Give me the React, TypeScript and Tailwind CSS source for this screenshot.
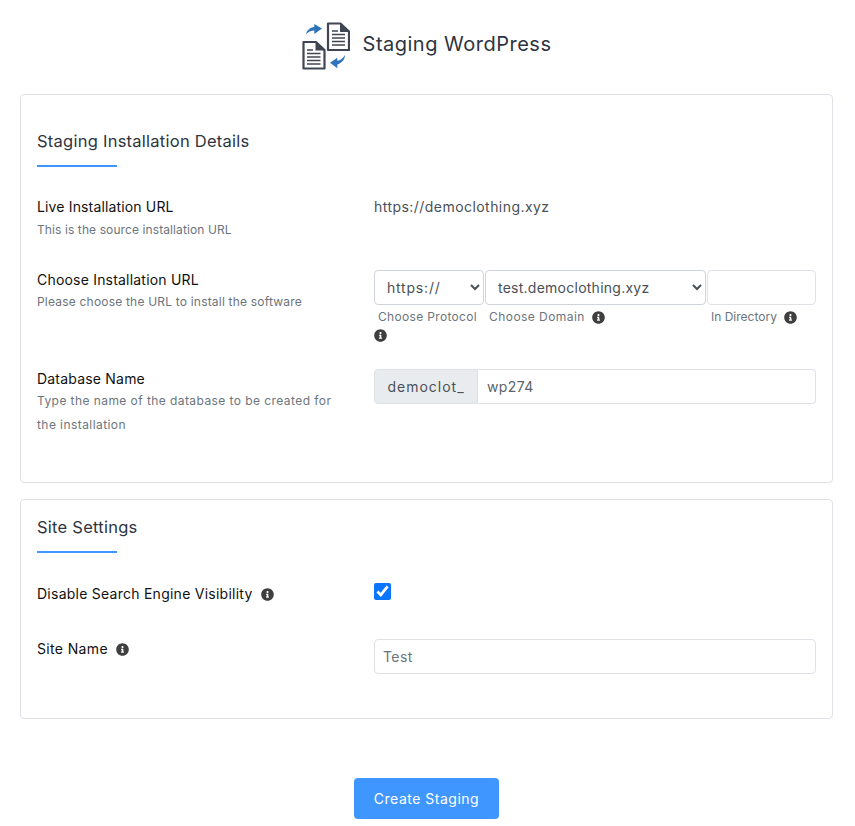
import { FaInfoCircle } from "react-icons/fa";

function Info({ className = "" }: { className?: string }) {
  return <FaInfoCircle className={`w-[13px] h-[13px] text-[#3f3f3f] ${className}`} />;
}

function StagingIcon() {
  return (
    <svg width="48" height="48" viewBox="0 0 48 48" className="shrink-0">
      {/* back document */}
      <path d="M26 1.500h12.500l8.500 8v18.500h-21z" fill="#fff" stroke="#3f4553" strokeWidth="2.200" strokeLinejoin="round" />
      <path d="M38 1v9h9.500z" fill="#3f4553" />
      <path d="M30 9h6M30 12.500h13M30 16h13M30 19.500h13M30 23h13" stroke="#3f4553" strokeWidth="1.600" />
      {/* front document */}
      <path d="M1.500 20h12.500l8.500 8v18.500h-21z" fill="#fff" stroke="#3f4553" strokeWidth="2.200" strokeLinejoin="round" />
      <path d="M13.500 19.500v9h9.500z" fill="#3f4553" />
      <path d="M5 28h6M5 31.500h13.500M5 35h13.500M5 38.500h13.500M5 42h13.500" stroke="#3f4553" strokeWidth="1.600" />
      {/* arrows */}
      <path d="M4 12.500C4.500 8.500 8 5.500 12.300 5V2L20 6.500 12.300 12V8.500C9 8.500 6 10 4 12.500z" fill="#2f74ba" />
      <path d="M43 33C43 38 39 41.500 35.300 42.500V46.300L28 40.700 35.300 35.800V38.800C38.500 38.500 41 36 43 33z" fill="#2f74ba" />
    </svg>
  );
}

function Card({ title, className, children }: { title: string; className: string; children: React.ReactNode }) {
  return (
    <section className={`border border-[#dee2e6] rounded-[4px] bg-white px-4 ${className}`}>
      <h2 className="text-[16.500px] leading-6 text-[#2e3440] tracking-[0.25px]">{title}</h2>
      <div className="w-20 h-[2px] bg-[#4096ff] mt-3" />
      {children}
    </section>
  );
}

export default function App() {
  return (
    <div className="font-['Inter',sans-serif] bg-white w-[855px] h-[826px] overflow-hidden px-5 pt-[22px] text-[#212529]">
      <header className="flex items-center justify-center gap-[13px] h-12 pr-[2px]">
        <StagingIcon />
        <h1 className="text-[20px] leading-7 mb-1 text-[#2e3440] tracking-[0.5px]">Staging WordPress</h1>
      </header>

      <div className="w-[813px] mt-6">
        <Card title="Staging Installation Details" className="pt-[34px] h-[389px]">
          <div className="grid grid-cols-[337px_442px] mt-[28px]">
            <div>
              <div className="text-[14px] leading-6 text-[#111] tracking-[0.15px]">Live Installation URL</div>
              <p className="text-[12px] leading-5 mt-[1px] text-[#6c757d] tracking-[0.1px]">This is the source installation URL</p>
            </div>
            <div className="text-[14px] leading-6 text-[#495057] tracking-[0.45px]">https://democlothing.xyz</div>
          </div>

          <div className="grid grid-cols-[337px_442px] mt-[30px]">
            <div>
              <div className="text-[14px] leading-5 text-[#111] tracking-[0.2px]">Choose Installation URL</div>
              <p className="text-[12px] leading-5 mt-[2px] text-[#6c757d] tracking-[0.2px]">Please choose the URL to install the software</p>
            </div>
            <div className="flex gap-[1px]">
              <div className="w-[110px]">
                <select className="w-full h-[35px] border border-[#ced4da] rounded-[4px] bg-white pl-2 text-[14px] text-[#495057] tracking-[0.8px]">
                  <option>https://</option>
                </select>
                <div className="text-[12px] leading-[14px] mt-[5px] pl-1 text-[#6c757d] tracking-[0.33px] whitespace-nowrap">Choose Protocol</div>
                <Info className="mt-[5px]" />
              </div>
              <div className="w-[221px]">
                <select className="w-full h-[35px] border border-[#ced4da] rounded-[4px] bg-white pl-2 text-[14px] text-[#495057] tracking-[0.25px]">
                  <option>test.democlothing.xyz</option>
                </select>
                <div className="flex items-center gap-[7px] text-[12px] leading-[14px] mt-[5px] pl-1 text-[#6c757d] tracking-[0.45px]">
                  Choose Domain <Info />
                </div>
              </div>
              <div className="w-[109px]">
                <input className="w-full h-[35px] border border-[#dee2e6] rounded-[4px] bg-white" />
                <div className="flex items-center gap-[7px] text-[12px] leading-[14px] mt-[5px] pl-1 text-[#6c757d]">
                  In Directory <Info />
                </div>
              </div>
            </div>
          </div>

          <div className="grid grid-cols-[337px_442px] mt-[27px]">
            <div>
              <div className="text-[14px] leading-5 text-[#111] tracking-[0.2px]">Database Name</div>
              <p className="text-[12px] leading-6 w-[300px] text-[#6c757d] tracking-[0.43px]">
                Type the name of the database to be created for the installation
              </p>
            </div>
            <div className="flex h-[35px]">
              <span className="flex items-center justify-center w-[104px] bg-[#e9ecef] border border-[#dee2e6] rounded-l-[4px] text-[14px] text-[#495057] tracking-[1px]">
                democlot_
              </span>
              <input
                defaultValue="wp274"
                className="flex-1 min-w-0 border border-l-0 border-[#dee2e6] rounded-r-[4px] px-[9px] text-[14px] text-[#5c636a] tracking-[0.4px]"
              />
            </div>
          </div>
        </Card>

        <Card title="Site Settings" className="pt-[15px] h-[220px] mt-4">
          <div className="grid grid-cols-[337px_442px] mt-[29px] items-start">
            <div className="flex items-center gap-2 text-[14px] leading-6 text-[#111] tracking-[0.25px]">
              Disable Search Engine Visibility <Info />
            </div>
            <input type="checkbox" defaultChecked className="w-[17px] h-[17px] m-0 mt-[1px] accent-[#0a75ff]" />
          </div>
          <div className="grid grid-cols-[337px_442px] mt-[33px] items-start">
            <div className="flex items-center gap-2 text-[14px] leading-5 text-[#111] tracking-[0.35px]">
              Site Name <Info />
            </div>
            <input
              defaultValue="Test"
              className="h-[35px] border border-[#dee2e6] rounded-[4px] px-2 text-[14px] text-[#6c757d] tracking-[0.4px]"
            />
          </div>
        </Card>
      </div>

      <div className="flex justify-center mt-[59px] w-[813px]">
        <button className="w-[145px] h-[41px] bg-[#4096ff] rounded-[4px] text-white text-[14px] tracking-[0.5px]">
          Create Staging
        </button>
      </div>
    </div>
  );
}
